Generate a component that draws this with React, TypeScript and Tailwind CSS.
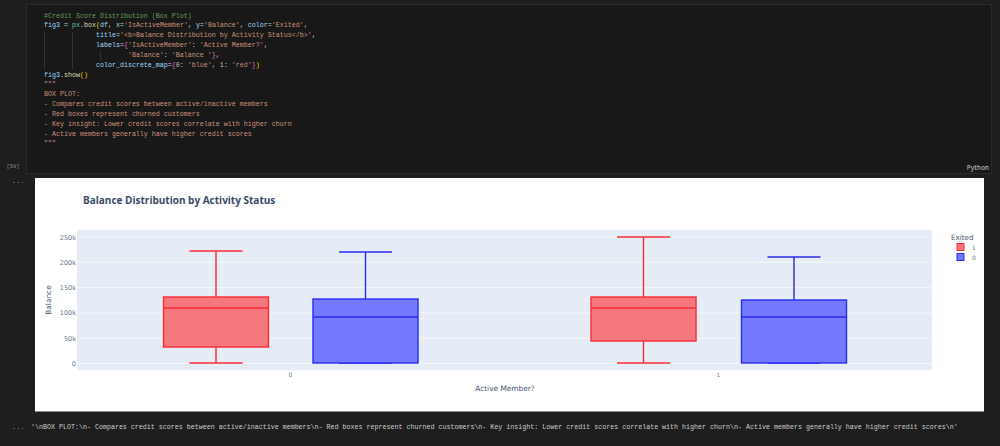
import React from 'react';

const mono = "font-['Liberation_Mono',monospace]";
const V = ({ children }: { children: React.ReactNode }) => <span className="text-[#9cdcfe]">{children}</span>;
const S = ({ children }: { children: React.ReactNode }) => <span className="text-[#ce9178]">{children}</span>;
const T = ({ children }: { children: React.ReactNode }) => <span className="text-[#d4d4d4]">{children}</span>;
const Y = ({ children }: { children: React.ReactNode }) => <span className="text-[#ffd700]">{children}</span>;
const P = ({ children }: { children: React.ReactNode }) => <span className="text-[#da70d6]">{children}</span>;

const boxes = [
  { cx: 216, top: 251, q3: 297, med: 308, q1: 347, low: 363, color: '#fa2a35', fill: '#f5787f' },
  { cx: 365.5, top: 252, q3: 299, med: 317, q1: 363, low: 363, color: '#2a2aee', fill: '#7378ff' },
  { cx: 643.5, top: 237, q3: 297, med: 308, q1: 341, low: 363, color: '#fa2a35', fill: '#f5787f' },
  { cx: 794, top: 257, q3: 300, med: 317, q1: 363, low: 363, color: '#2a2aee', fill: '#7378ff' },
];

const ticks = [
  { label: '250k', y: 237 },
  { label: '200k', y: 262.3 },
  { label: '150k', y: 287.6 },
  { label: '100k', y: 312.9 },
  { label: '50k', y: 338.2 },
  { label: '0', y: 363.5 },
];

const Chart = () => (
  <svg viewBox="35 178 949 233" className="block h-[233px] w-[949px]">
    <text x="83" y="204" fontSize="10" fontWeight="700" fill="#3b4a68" fontFamily="'Open Sans', sans-serif">
      Balance Distribution by Activity Status
    </text>
    <rect x="77" y="230" width="855" height="140" fill="#e5ecf6" />
    {ticks.map((t) => (
      <g key={t.label}>
        <line x1="77" x2="932" y1={t.y} y2={t.y} stroke="#f4f7fb" strokeWidth="1" />
        <text x="76" y={t.y + 2.5} textAnchor="end" fontSize="6.5" fill="#6b7688" fontFamily="'DejaVu Sans', sans-serif">
          {t.label}
        </text>
      </g>
    ))}
    {boxes.map((b) => (
      <g key={b.cx} stroke={b.color} strokeWidth="1.4">
        <line x1={b.cx} x2={b.cx} y1={b.top} y2={b.q3} />
        <line x1={b.cx} x2={b.cx} y1={b.q1} y2={b.low} />
        <line x1={b.cx - 26.5} x2={b.cx + 26.5} y1={b.top} y2={b.top} />
        <line x1={b.cx - 26.5} x2={b.cx + 26.5} y1={b.low} y2={b.low} />
        <rect x={b.cx - 52.5} y={b.q3} width="105" height={b.q1 - b.q3} fill={b.fill} />
        <line x1={b.cx - 52.5} x2={b.cx + 52.5} y1={b.med} y2={b.med} strokeWidth="1.6" />
      </g>
    ))}
    <g fontFamily="'DejaVu Sans', sans-serif" fill="#6b7688">
      <text x="290.5" y="377" textAnchor="middle" fontSize="6">0</text>
      <text x="718.5" y="377" textAnchor="middle" fontSize="6">1</text>
      <text x="505" y="391" textAnchor="middle" fontSize="7.4" fill="#4a566e">Active Member?</text>
      <text
        x="51"
        y="300"
        textAnchor="middle"
        fontSize="7.4"
        fill="#4a566e"
        transform="rotate(-90 51 300)"
      >
        Balance
      </text>
      <text x="951" y="240" fontSize="7.2" fill="#4a566e">Exited</text>
      <rect x="957" y="243.5" width="7" height="7" fill="#f5787f" stroke="#fa2a35" strokeWidth="1" />
      <rect x="957" y="253.5" width="7" height="7" fill="#7378ff" stroke="#2a2aee" strokeWidth="1" />
      <text x="972" y="250" fontSize="6">1</text>
      <text x="972" y="260" fontSize="6">0</text>
    </g>
  </svg>
);

const Guide = ({ left, top, height }: { left: number; top: number; height: number }) => (
  <span className="absolute w-px bg-[#333333]" style={{ left, top, height }} />
);

export default function App() {
  return (
    <div className={`flex h-[446px] w-[1000px] flex-col overflow-hidden bg-[#1e1e1e] pt-[4px] ${mono}`}>
      {/* Celda de codigo */}
      <div className="flex h-[170px]">
        <div className="flex w-[26px] items-end justify-center pb-[3px] text-[5.5px] leading-[8px] text-[#8a8a8a]">
          [58]
        </div>
        <div className="flex w-[966px] flex-col justify-between border border-[#2a2a2a] bg-[#181818]">
          <div className="relative whitespace-pre pl-[17px] pt-[6.5px] text-[6.67px] leading-[9.85px]">
            <Guide left={17} top={27} height={38} />
            <Guide left={45} top={27} height={38} />
            <Guide left={73} top={46} height={10} />
            <div className="text-[#6a9955]">#Credit Score Distribution (Box Plot)</div>
            <div>
              <V>fig3</V> <T>=</T> <span className="text-[#4ec9b0]">px</span>
              <T>.</T>
              <span className="text-[#dcdcaa]">box</span>
              <Y>(</Y>
              <V>df</V>
              <T>, </T>
              <V>x</V>
              <T>=</T>
              <S>'IsActiveMember'</S>
              <T>, </T>
              <V>y</V>
              <T>=</T>
              <S>'Balance'</S>
              <T>, </T>
              <V>color</V>
              <T>=</T>
              <S>'Exited'</S>
              <T>,</T>
            </div>
            <div>
              {'             '}
              <V>title</V>
              <T>=</T>
              <S>'&lt;b&gt;Balance Distribution by Activity Status&lt;/b&gt;'</S>
              <T>,</T>
            </div>
            <div>
              {'             '}
              <V>labels</V>
              <T>=</T>
              <P>{'{'}</P>
              <S>'IsActiveMember'</S>
              <T>: </T>
              <S>'Active Member?'</S>
              <T>,</T>
            </div>
            <div>
              {'                     '}
              <S>'Balance'</S>
              <T>: </T>
              <S>'Balance '</S>
              <P>{'}'}</P>
              <T>,</T>
            </div>
            <div>
              {'             '}
              <V>color_discrete_map</V>
              <T>=</T>
              <P>{'{'}</P>
              <span className="text-[#b5cea8]">0</span>
              <T>: </T>
              <S>'blue'</S>
              <T>, </T>
              <span className="text-[#b5cea8]">1</span>
              <T>: </T>
              <S>'red'</S>
              <P>{'}'}</P>
              <Y>)</Y>
            </div>
            <div>
              <V>fig3</V>
              <T>.</T>
              <span className="text-[#dcdcaa]">show</span>
              <Y>()</Y>
            </div>
            <div className="text-[#ce9178]">{'"""'}</div>
            <div className="text-[#ce9178]">BOX PLOT:</div>
            <div className="text-[#ce9178]">- Compares credit scores between active/inactive members</div>
            <div className="text-[#ce9178]">- Red boxes represent churned customers</div>
            <div className="text-[#ce9178]">- Key insight: Lower credit scores correlate with higher churn</div>
            <div className="text-[#ce9178]">- Active members generally have higher credit scores</div>
            <div className="text-[#ce9178]">{'"""'}</div>
          </div>
          <div className="self-end pb-[1px] pr-[2px] font-['Open_Sans',sans-serif] text-[6.5px] font-semibold leading-[9px] text-[#b0b0b0]">
            Python
          </div>
        </div>
      </div>

      {/* Salida del grafico */}
      <div className="mt-[4px] flex">
        <div className="w-[35px] pl-[12px] text-[7px] leading-[7px] text-[#9a9a9a]">...</div>
        <div className="border-b border-[#8a8a8a] bg-white">
          <Chart />
        </div>
      </div>

      {/* Salida de texto */}
      <div className="mt-[10px] flex items-center">
        <div className="w-[31px] pl-[12px] text-[7px] leading-[8px] text-[#9a9a9a]">...</div>
        <div className="whitespace-pre text-[6.67px] leading-[10px] text-[#cccccc]">
          {"'\\nBOX PLOT:\\n- Compares credit scores between active/inactive members\\n- Red boxes represent churned customers\\n- Key insight: Lower credit scores correlate with higher churn\\n- Active members generally have higher credit scores\\n'"}
        </div>
      </div>
    </div>
  );
}
